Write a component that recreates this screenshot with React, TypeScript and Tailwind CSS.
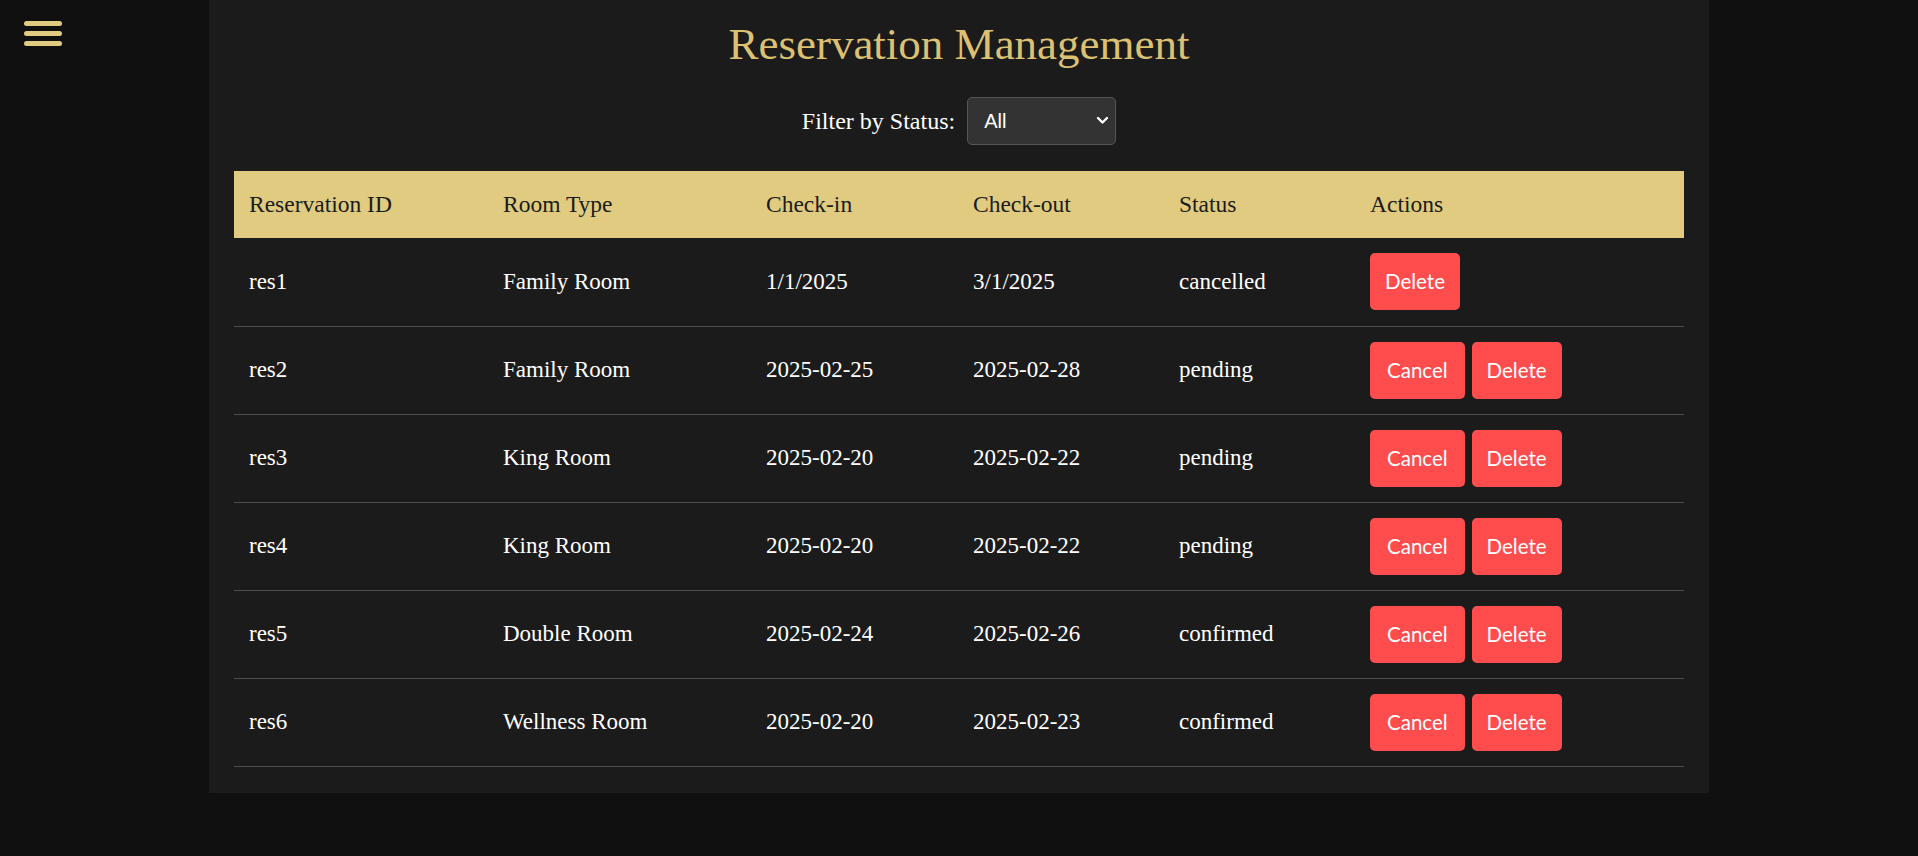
import { useState } from 'react';

type Reservation = {
  id: string;
  room: string;
  checkIn: string;
  checkOut: string;
  status: 'pending' | 'confirmed' | 'cancelled';
};

const reservations: Reservation[] = [
  { id: 'res1', room: 'Family Room', checkIn: '1/1/2025', checkOut: '3/1/2025', status: 'cancelled' },
  { id: 'res2', room: 'Family Room', checkIn: '2025-02-25', checkOut: '2025-02-28', status: 'pending' },
  { id: 'res3', room: 'King Room', checkIn: '2025-02-20', checkOut: '2025-02-22', status: 'pending' },
  { id: 'res4', room: 'King Room', checkIn: '2025-02-20', checkOut: '2025-02-22', status: 'pending' },
  { id: 'res5', room: 'Double Room', checkIn: '2025-02-24', checkOut: '2025-02-26', status: 'confirmed' },
  { id: 'res6', room: 'Wellness Room', checkIn: '2025-02-20', checkOut: '2025-02-23', status: 'confirmed' },
];

function ActionButton({ label, wide }: { label: string; wide?: boolean }) {
  return (
    <button
      className={
        wide
          ? "h-[57px] rounded-[5px] bg-[#ff4d4d] px-[17px] font-['Lato',sans-serif] text-[20.5px] text-white"
          : "h-[57px] rounded-[5px] bg-[#ff4d4d] px-[15px] font-['Lato',sans-serif] text-[20.5px] text-white"
      }
    >
      {label}
    </button>
  );
}

export default function App() {
  const [filter, setFilter] = useState('All');
  const shown = reservations.filter((r) => filter === 'All' || r.status === filter);

  return (
    <div className="relative min-h-[856px] bg-[#101010] font-['Liberation_Serif',serif]">
      <button className="absolute left-[24px] top-[21px] flex flex-col gap-[5px]" aria-label="Menu">
        <span className="block h-[5px] w-[38px] rounded-full bg-[#e0cb80]" />
        <span className="block h-[5px] w-[38px] rounded-full bg-[#e0cb80]" />
        <span className="block h-[5px] w-[38px] rounded-full bg-[#e0cb80]" />
      </button>

      <div className="mx-auto w-[1500px] bg-[#1b1b1b] px-[25px] pt-[19px] pb-[26px]">
        <h1 className="text-center text-[45px] leading-[51px] text-[#dcc173]">Reservation Management</h1>

        <div className="mt-[27px] flex items-center justify-center gap-[12px]">
          <label className="text-[24px] text-white">Filter by Status:</label>
          <div className="relative">
            <select
              value={filter}
              onChange={(e) => setFilter(e.target.value)}
              className="h-[48px] w-[149px] appearance-none rounded-[5px] border border-[#555] bg-[#333] pl-[16px] font-['Liberation_Sans',sans-serif] text-[20px] text-white outline-none"
            >
              <option>All</option>
              <option value="pending">Pending</option>
              <option value="confirmed">Confirmed</option>
              <option value="cancelled">Cancelled</option>
            </select>
            <svg
              className="pointer-events-none absolute right-[7px] top-[19px]"
              width="13"
              height="9"
              viewBox="0 0 13 9"
              fill="none"
            >
              <path d="M2 2 6.5 6.5 11 2" stroke="#fff" strokeWidth="2.4" strokeLinecap="round" strokeLinejoin="round" />
            </svg>
          </div>
        </div>

        <table className="mt-[26px] w-full table-fixed border-collapse text-left">
          <thead>
            <tr className="bg-[#e0cb80] text-[#1b1b1b]">
              <th className="h-[67px] w-[254px] px-[15px] text-[23.5px] font-normal">Reservation ID</th>
              <th className="w-[263px] px-[15px] text-[23.5px] font-normal">Room Type</th>
              <th className="w-[207px] px-[15px] text-[23.5px] font-normal">Check-in</th>
              <th className="w-[206px] px-[15px] text-[23.5px] font-normal">Check-out</th>
              <th className="w-[191px] px-[15px] text-[23.5px] font-normal">Status</th>
              <th className="px-[15px] text-[23.5px] font-normal">Actions</th>
            </tr>
          </thead>
          <tbody>
            {shown.map((r) => (
              <tr key={r.id} className="border-b border-[#4d4d4d] text-[23px] text-white">
                <td className="h-[88px] px-[15px]">{r.id}</td>
                <td className="px-[15px]">{r.room}</td>
                <td className="px-[15px]">{r.checkIn}</td>
                <td className="px-[15px]">{r.checkOut}</td>
                <td className="px-[15px]">{r.status}</td>
                <td className="px-[15px]">
                  <div className="flex gap-[7px]">
                    {r.status !== 'cancelled' && <ActionButton label="Cancel" wide />}
                    <ActionButton label="Delete" />
                  </div>
                </td>
              </tr>
            ))}
          </tbody>
        </table>
      </div>
    </div>
  );
}
